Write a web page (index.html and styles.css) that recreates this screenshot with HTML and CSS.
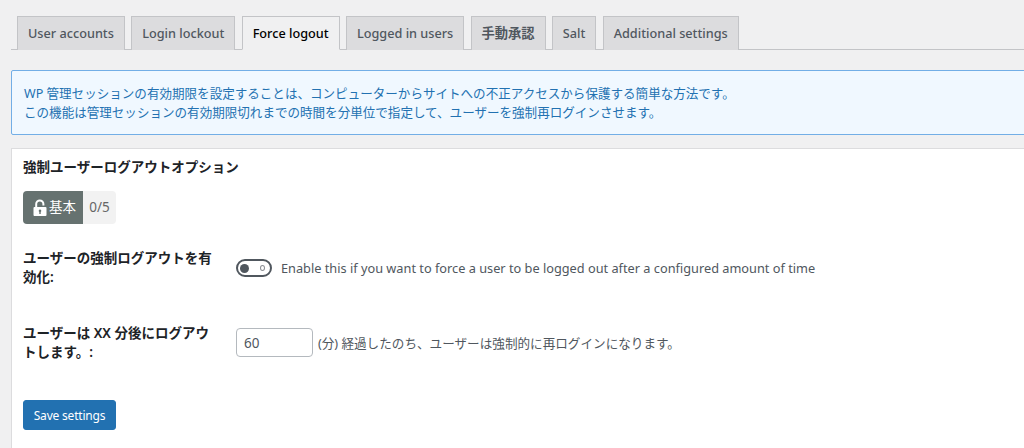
FILE: index.html
```html
<!DOCTYPE html>
<html lang="ja">
<head>
<meta charset="utf-8">
<title>Force logout</title>
<link rel="stylesheet" href="styles.css">
</head>
<body>
<div class="wrap">
  <nav class="tabs">
    <a class="tab">User accounts</a>
    <a class="tab">Login lockout</a>
    <a class="tab active">Force logout</a>
    <a class="tab">Logged in users</a>
    <a class="tab tab-ja">手動承認</a>
    <a class="tab">Salt</a>
    <a class="tab">Additional settings</a>
  </nav>
  <div class="notice">
    <p>WP 管理セッションの有効期限を設定することは、コンピューターからサイトへの不正アクセスから保護する簡単な方法です。</p>
    <p>この機能は管理セッションの有効期限切れまでの時間を分単位で指定して、ユーザーを強制再ログインさせます。</p>
  </div>
  <section class="panel">
    <h3 class="panel-title">強制ユーザーログアウトオプション</h3>
    <div class="badge">
      <span class="badge-level">
        <svg class="lock" viewBox="0 0 14 18" width="14" height="18" aria-hidden="true">
          <path d="M3.2 8V5a3.6 3.6 0 0 1 7.2 0v1.6" fill="none" stroke="#fff" stroke-width="2"/>
          <path fill-rule="evenodd" fill="#fff" d="M1.5 8h11a1 1 0 0 1 1 1v7a1 1 0 0 1-1 1h-11a1 1 0 0 1-1-1V9a1 1 0 0 1 1-1zM7 10.5a1.3 1.3 0 0 0-.7 2.4V15h1.4v-2.1a1.3 1.3 0 0 0-.7-2.4z"/>
        </svg><span class="badge-text">基本</span></span><span class="badge-score">0/5</span>
    </div>
    <div class="row row-toggle">
      <div class="label">ユーザーの強制ログアウトを有効化:</div>
      <div class="field">
        <span class="toggle"><span class="knob"></span><span class="off-mark"></span></span>
        <span class="desc">Enable this if you want to force a user to be logged out after a configured amount of time</span>
      </div>
    </div>
    <div class="row row-input">
      <div class="label">ユーザーは XX 分後にログアウトします。:</div>
      <div class="field">
        <input class="num" type="text" value="60">
        <span class="desc desc-small">(分) 経過したのち、ユーザーは強制的に再ログインになります。</span>
      </div>
    </div>
    <button class="save" type="button">Save settings</button>
  </section>
</div>
</body>
</html>
```
FILE: styles.css
```css
* { box-sizing: border-box; }
html, body { margin: 0; height: 100%; overflow: hidden; }
body {
  background: #f0f0f1;
  color: #3c434a;
  font-family: "Noto Sans", "Noto Sans CJK JP", sans-serif;
  font-size: 13px;
  line-height: 20px;
}
.wrap { padding: 16px 0 0 11px; width: 1040px; }
.tabs {
  display: flex;
  height: 34px;
  padding-left: 6px;
  gap: 6.3px;
  border-bottom: 1px solid #c3c4c7;
}
.tab {
  height: 34px;
  padding: 6px 10px 0;
  line-height: 21px;
  background: #dcdcde;
  border: 1px solid #c3c4c7;
  border-bottom: 0;
  color: #50575e;
  font-size: 12.7px;
  font-weight: 500;
  white-space: nowrap;
}
.tab-ja { font-size: 13.25px; font-weight: 600; }
.tab.active { background: #f0f0f1; color: #000; border-bottom: 1px solid #f0f0f1; }
.notice {
  margin-top: 20px;
  height: 65px;
  padding: 14px 12px;
  background: #f0f8ff;
  border: 1px solid #72aee6;
  border-radius: 2px;
  color: #2271b1;
  font-size: 12.55px;
  line-height: 18.5px;
}
.notice p { margin: 0; }
.panel {
  margin-top: 13px;
  height: 320px;
  padding: 8px 11px;
  background: #fff;
  border: 1px solid #dcdcde;
  border-right: 0;
}
.panel-title { margin: 0; font-size: 13.5px; line-height: 20px; font-weight: 600; color: #1d2327; }
.badge {
  display: flex;
  width: 93px;
  height: 33px;
  margin-top: 14px;
  border-radius: 4px;
  overflow: hidden;
  font-size: 13.5px;
  line-height: 32px;
}
.badge-level {
  display: flex;
  align-items: center;
  gap: 2px;
  width: 60px;
  padding-left: 10px;
  background: #667270;
  color: #fff;
}
.badge-text { position: relative; top: -1px; }
.lock { flex: none; }
.badge-score { flex: 1; text-align: center; background: #f2f2f2; color: #666; font-size: 13.5px; }
.row { display: flex; }
.label { width: 196px; font-size: 13.5px; font-weight: 600; color: #1d2327; margin-right: 17px; line-height: 19px; }
.field { display: flex; align-items: center; }
.row-toggle { margin-top: 25px; }
.row-toggle .field { height: 40px; align-self: flex-start; margin-top: -1px; }
.toggle {
  position: relative;
  width: 36px;
  height: 18px;
  margin-right: 9px;
  border: 2px solid #50575e;
  border-radius: 9px;
  background: #fff;
}
.knob { position: absolute; left: 2px; top: 2.5px; width: 9px; height: 9px; border-radius: 50%; background: #50575e; }
.off-mark { position: absolute; right: 5px; top: 4px; width: 5px; height: 6px; border: 1px solid #8c8f94; border-radius: 50%; }
.desc { color: #50575e; font-size: 12.75px; }
.row-input { margin-top: 36px; }
.row-input .field { align-self: flex-start; margin-top: 4px; }
.num {
  width: 77px;
  height: 29px;
  padding: 0 7px;
  margin-right: 5px;
  border: 1px solid #b4b9be;
  border-radius: 4px;
  background: #fff;
  color: #50575e;
  font: 13.5px "Noto Sans", sans-serif;
}
.desc-small { font-size: 12.6px; padding-top: 2px; }
.save {
  display: block;
  width: 93px;
  height: 30px;
  margin-top: 38px;
  padding: 0;
  background: #2271b1;
  border: 1px solid #2271b1;
  border-radius: 3px;
  color: #fff;
  font: 12px "Noto Sans", sans-serif;
  letter-spacing: -0.2px;
}
```
